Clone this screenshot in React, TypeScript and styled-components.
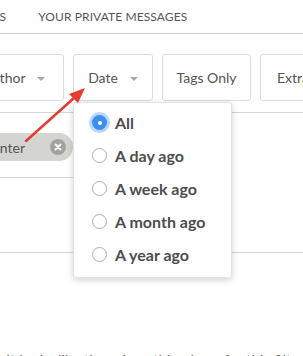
import React from 'react';
import styled, { createGlobalStyle } from 'styled-components';

const GlobalStyle = createGlobalStyle`
  html, body {
    margin: 0;
    padding: 0;
    background: #fff;
    overflow: hidden;
  }
  body {
    font-family: Lato, "Open Sans", sans-serif;
    color: #555;
  }
`;

const Page = styled.div`
  position: relative;
  width: 303px;
  height: 356px;
  overflow: hidden;
`;

const TabBar = styled.div`
  display: flex;
  align-items: center;
  height: 33px;
  border-bottom: 1px solid #cfcfcf;
  margin-left: -96px;
`;

const Tab = styled.div`
  flex: none;
  font-size: 12px;
  letter-spacing: 0.1px;
  color: #555;
  text-transform: uppercase;
  white-space: nowrap;
  margin-right: 32px;
`;

const FilterRow = styled.div`
  display: flex;
  gap: 9px;
  margin-top: 20px;
  margin-left: -36px;
  padding-bottom: 11px;
  border-bottom: 1px solid #d6d6d6;
`;

const FilterButton = styled.div<{ w?: number }>`
  box-sizing: border-box;
  flex: none;
  width: ${({ w }) => (w ? `${w}px` : 'auto')};
  height: 47px;
  padding: 0 16px;
  border: 1px solid #dcdcdc;
  border-radius: 3px;
  display: flex;
  align-items: center;
  justify-content: center;
  gap: 12px;
  font-size: 14px;
  color: #555;
  white-space: nowrap;
`;

const Caret = styled.span`
  width: 0;
  height: 0;
  border-left: 4px solid transparent;
  border-right: 4px solid transparent;
  border-top: 4px solid #a8a8a8;
  margin-top: 2px;
`;

const ChipSection = styled.div`
  width: 150px;
  height: 64px;
  display: flex;
  align-items: center;
  border-bottom: 1px solid #d6d6d6;
`;

const Chip = styled.div`
  box-sizing: border-box;
  flex: none;
  width: 140px;
  height: 28px;
  margin-left: -67px;
  margin-top: 4px;
  padding: 0 7px 0 12px;
  border-radius: 14px;
  background: #d4d5d0;
  display: flex;
  align-items: center;
  gap: 25px;
`;

const ChipLabel = styled.span`
  flex: 1;
  text-align: right;
  font-size: 14px;
  color: #555;
  white-space: nowrap;
`;

const ChipClose = styled.span`
  flex: none;
  width: 16px;
  height: 16px;
  border-radius: 50%;
  background: #a2a39f;
  display: flex;
  align-items: center;
  justify-content: center;
`;

const EmptySection = styled.div`
  height: 74px;
  border-bottom: 1px solid #d6d6d6;
`;

const BodyText = styled.p`
  margin: 0;
  padding: 98px 0 0 6px;
  font-size: 15px;
  color: #666;
  white-space: nowrap;
`;

const Menu = styled.div`
  position: absolute;
  left: 73px;
  top: 102px;
  box-sizing: border-box;
  width: 159px;
  height: 176px;
  background: #fff;
  border: 1px solid #e2e2e2;
  border-radius: 3px;
  box-shadow: 0 2px 7px rgba(0, 0, 0, 0.18);
  padding: 3px 0 0 18px;
  display: flex;
  flex-direction: column;
`;

const Option = styled.label`
  display: flex;
  align-items: center;
  gap: 8px;
  height: 33px;
  font-size: 16px;
  font-weight: 700;
  color: #4d4d4d;
  white-space: nowrap;
`;

const Radio = styled.span<{ checked?: boolean }>`
  box-sizing: border-box;
  flex: none;
  width: 15px;
  height: 15px;
  border-radius: 50%;
  border: ${({ checked }) => (checked ? 'none' : '1.5px solid #ababab')};
  background: ${({ checked }) => (checked ? '#3d8ef2' : '#fff')};
  box-shadow: ${({ checked }) => (checked ? '0 0 0 3px rgba(61, 142, 242, 0.35)' : 'none')};
  display: flex;
  align-items: center;
  justify-content: center;

  &::after {
    content: '';
    display: ${({ checked }) => (checked ? 'block' : 'none')};
    width: 4px;
    height: 4px;
    border-radius: 50%;
    background: #fff;
  }
`;

const Arrow = styled.svg`
  position: absolute;
  left: 0;
  top: 0;
  pointer-events: none;
`;

const options = ['All', 'A day ago', 'A week ago', 'A month ago', 'A year ago'];

const App = () => {
  return (
    <Page>
      <GlobalStyle />
      <TabBar>
        <Tab>All Discussions</Tab>
        <Tab>Your Private Messages</Tab>
      </TabBar>

      <FilterRow>
        <FilterButton w={100}>
          Author <Caret />
        </FilterButton>
        <FilterButton w={80}>
          Date <Caret />
        </FilterButton>
        <FilterButton w={89}>Tags Only</FilterButton>
        <FilterButton>Extras</FilterButton>
      </FilterRow>

      <ChipSection>
        <Chip>
          <ChipLabel>Help Center</ChipLabel>
          <ChipClose>
            <svg width="8" height="8" viewBox="0 0 8 8">
              <path d="M1.5 1.5 L6.5 6.5 M6.5 1.5 L1.5 6.5" stroke="#fff" strokeWidth="1.8" strokeLinecap="round" />
            </svg>
          </ChipClose>
        </Chip>
      </ChipSection>

      <EmptySection />

      <BodyText>It looks like there is nothing here for this filter</BodyText>

      <Menu>
        {options.map((o, i) => (
          <Option key={o}>
            <Radio checked={i === 0} />
            {o}
          </Option>
        ))}
      </Menu>

      <Arrow width="303" height="356" viewBox="0 0 303 356">
        <line x1="26" y1="141" x2="74" y2="98" stroke="#e63b2e" strokeWidth="2.5" strokeLinecap="round" />
        <polygon points="85,88 69,94 78,103" fill="#e63b2e" />
      </Arrow>
    </Page>
  );
};

export default App;
